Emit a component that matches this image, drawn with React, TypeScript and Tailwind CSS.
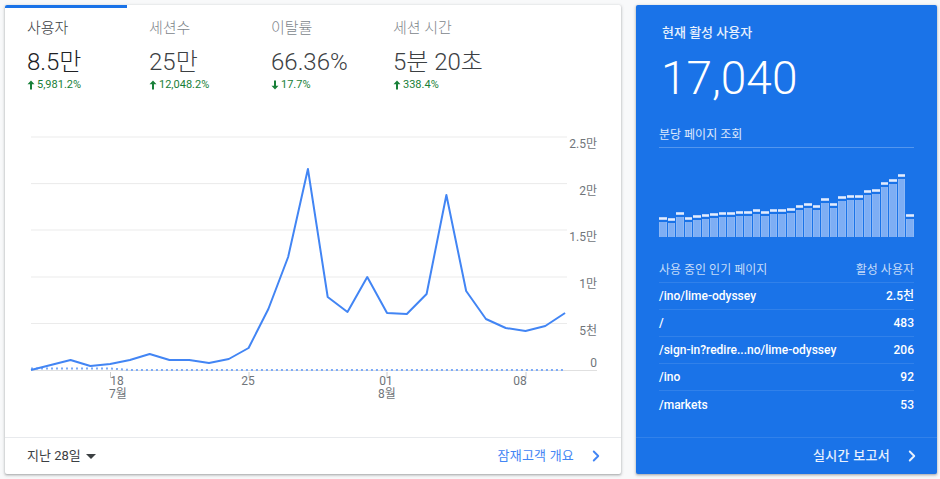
import React from 'react';
import { ChevronRight } from 'lucide-react';

const metrics = [
  { label: '사용자', value: '8.5만', change: '5,981.2%', up: true },
  { label: '세션수', value: '25만', change: '12,048.2%', up: true },
  { label: '이탈률', value: '66.36%', change: '17.7%', up: false },
  { label: '세션 시간', value: '5분 20초', change: '338.4%', up: true },
];

// y values in chart coords (page y - 100)
const usersLine = [
  270, 265, 260, 266, 264, 260, 254, 260, 260, 263, 259, 248, 209, 157, 69, 197, 212, 177, 213, 214, 194, 95,
  191, 219, 228, 231, 226, 213,
];

const gridY = [37, 83.6, 130, 177, 223.5];
const yLabels = [
  { t: '2.5만', y: 44 },
  { t: '2만', y: 91 },
  { t: '1.5만', y: 137 },
  { t: '1만', y: 184 },
  { t: '5천', y: 231 },
  { t: '0', y: 263 },
];

const xTicks = [
  { x: 105.5, label: '18', lx: 112, month: '7월' },
  { x: 244, label: '25', lx: 243 },
  { x: 382, label: '01', lx: 381, month: '8월' },
  { x: 521, label: '08', lx: 515 },
];

const bars = [16, 15, 21, 16, 18, 19, 20, 21, 21, 22, 22, 24, 22, 24, 24, 25, 28, 30, 28, 35, 30, 37, 38, 38, 43, 44, 51, 54, 59, 19];

const pages = [
  { path: '/ino/lime-odyssey', count: '2.5천' },
  { path: '/', count: '483' },
  { path: '/sign-in?redire...no/lime-odyssey', count: '206' },
  { path: '/ino', count: '92' },
  { path: '/markets', count: '53' },
];

function Arrow({ up }: { up: boolean }) {
  return (
    <svg width="8" height="10" viewBox="0 0 8 10" className="mr-[2px]">
      {up ? (
        <path d="M4 0.5 L7.5 4.2 H5 V9.5 H3 V4.2 H0.5 Z" fill="#188038" />
      ) : (
        <path d="M4 9.5 L7.5 5.8 H5 V0.5 H3 V5.8 H0.5 Z" fill="#188038" />
      )}
    </svg>
  );
}

function UsersChart() {
  const pts = usersLine.map((y, i) => `${26 + i * 19.78},${y}`).join(' ');
  const dotted = usersLine.map((_, i) => `${26 + i * 19.78},${i < 5 ? 268.5 : 270}`).join(' ');
  return (
    <svg width="616" height="337" viewBox="0 0 616 337" className="block">
      {gridY.map((y) => (
        <line key={y} x1="26" x2="562" y1={y} y2={y} stroke="#ebebeb" strokeWidth="1" />
      ))}
      <line x1="26" x2="592" y1="270.5" y2="270.5" stroke="#e0e0e0" strokeWidth="1" />
      {yLabels.map((l) => (
        <text
          key={l.t}
          x="592"
          y={l.y + 4}
          textAnchor="end"
          fontSize="12"
          fill="#70757a"
          fontFamily="Roboto, 'Noto Sans CJK KR', sans-serif"
        >
          {l.t}
        </text>
      ))}
      {xTicks.map((t) => (
        <g key={t.label}>
          <line x1={t.x} x2={t.x} y1="272" y2="278" stroke="#cccccc" strokeWidth="1" />
          <text
            x={t.lx}
            y="285"
            textAnchor="middle"
            fontSize="12"
            fill="#70757a"
            fontFamily="Roboto, 'Noto Sans CJK KR', sans-serif"
          >
            {t.label}
          </text>
          {t.month && (
            <text
              x={t.lx + 1}
              y="298"
              textAnchor="middle"
              fontSize="12"
              fill="#70757a"
              fontFamily="Roboto, 'Noto Sans CJK KR', sans-serif"
            >
              {t.month}
            </text>
          )}
        </g>
      ))}
      <polyline points={dotted} fill="none" stroke="#7baaf7" strokeWidth="2" strokeDasharray="2 3" />
      <polyline points={pts} fill="none" stroke="#4285f4" strokeWidth="2" strokeLinejoin="round" />
    </svg>
  );
}

export default function App() {
  return (
    <div
      className="w-[940px] h-[479px] bg-[#f8f9fa] flex pl-[5px] pt-[5px] gap-[15px]"
      style={{ fontFamily: "Roboto, 'Noto Sans CJK KR', 'Noto Sans', sans-serif" }}
    >
      {/* Audience overview */}
      <div className="w-[616px] h-[469px] bg-white rounded-[2px] shadow-[0_1px_2px_rgba(60,64,67,0.3),0_1px_3px_1px_rgba(60,64,67,0.15)] flex flex-col overflow-hidden">
        <div className="h-[95px] flex shrink-0">
          {metrics.map((m, i) => (
            <div
              key={m.label}
              className={`w-[122px] pl-[22px] border-t-[3px] ${i === 0 ? 'border-[#1a73e8]' : 'border-transparent'}`}
            >
              <div className={`pt-[10px] text-[15px] leading-5 font-light ${i === 0 ? 'text-[#3c4043]' : 'text-[#80868b]'}`}>
                {m.label}
              </div>
              <div className={`mt-[9px] text-[24px] leading-[30px] font-light whitespace-nowrap ${i === 0 ? 'text-[#202124]' : 'text-[#3c4043]'}`}>
                {m.value}
              </div>
              <div className="mt-[1px] flex items-center text-[11px] leading-[14px] text-[#188038]">
                <Arrow up={m.up} />
                {m.change}
              </div>
            </div>
          ))}
        </div>
        <div className="h-[337px] shrink-0">
          <UsersChart />
        </div>
        <div className="h-[37px] border-t border-[#e8eaed] flex items-center justify-between pl-[22px] pr-[16px]">
          <button className="flex items-center gap-[5px] text-[13px] text-[#3c4043]">
            지난 28일
            <svg width="10" height="5" viewBox="0 0 10 5">
              <path d="M0 0 L10 0 L5 5 Z" fill="#3c4043" />
            </svg>
          </button>
          <button className="flex items-center gap-[13px] text-[13px] text-[#4285f4] tracking-[0.2px]">
            잠재고객 개요
            <ChevronRight className="w-[18px] h-[18px] text-[#4285f4]" strokeWidth={2.5} />
          </button>
        </div>
      </div>

      {/* Realtime */}
      <div className="w-[301px] h-[469px] bg-[#1a73e8] rounded-[2px] shadow-[0_1px_2px_rgba(60,64,67,0.3),0_1px_3px_1px_rgba(60,64,67,0.15)] flex flex-col text-white">
        <div className="px-[23px] flex flex-col">
          <div className="pt-[20px] pl-[3px] text-[13px] leading-4 font-medium text-white/90">현재 활성 사용자</div>
          <div className="mt-[11px] pl-[2px] text-[46px] leading-[52px] font-light">17,040</div>
          <div className="mt-[23px] pb-[4px] text-[12px] leading-4 text-white/85 border-b border-white/25">
            분당 페이지 조회
          </div>
          <div className="h-[89px] flex items-end gap-px">
            {bars.map((h, i) => (
              <div key={i} className="flex-1 flex flex-col" style={{ height: h + 4 }}>
                <div className="h-[3px] bg-[#e3edfd] border-y border-[#b9d2fa] shrink-0" />
                <div className="h-[2px] shrink-0" />
                <div className="flex-1 bg-[#7eaef4] border-x border-[#8db8f6]" />
              </div>
            ))}
          </div>
          <div className="mt-[25px] pb-[4px] flex justify-between text-[12px] leading-4 text-white/75 border-b border-white/10">
            <span>사용 중인 인기 페이지</span>
            <span>활성 사용자</span>
          </div>
          {pages.map((p, i) => (
            <div
              key={p.path}
              className={`h-[27px] flex items-center justify-between text-[12px] font-medium ${i < pages.length - 1 ? 'border-b border-white/10' : ''}`}
            >
              <span>{p.path}</span>
              <span>{p.count}</span>
            </div>
          ))}
        </div>
        <div className="flex-1" />
        <div className="h-[37px] border-t border-white/10 flex items-center justify-end pr-[16px]">
          <button className="flex items-center gap-[13px] text-[13px] font-medium text-white/90 tracking-[0.3px]">
            실시간 보고서
            <ChevronRight className="w-[18px] h-[18px]" strokeWidth={2.5} />
          </button>
        </div>
      </div>
    </div>
  );
}
